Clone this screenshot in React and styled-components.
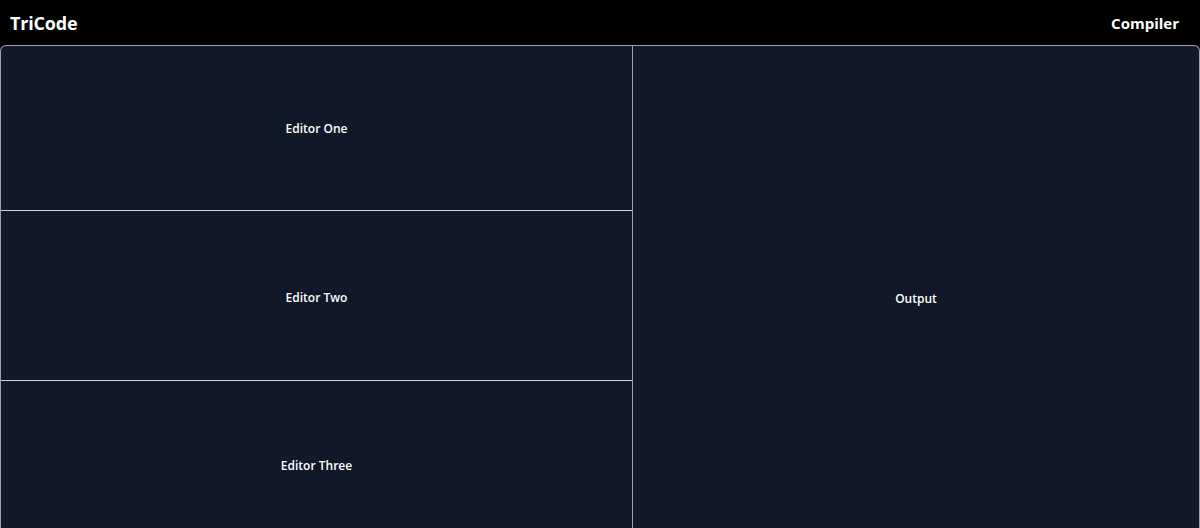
import React from "react";
import styled, { createGlobalStyle } from "styled-components";

const Global = createGlobalStyle`
  html, body { margin: 0; padding: 0; background: #000; }
  body { font-family: "Open Sans", "Noto Sans", sans-serif; color: #fff; }
  * { box-sizing: border-box; }
`;

const Header = styled.header`
  height: 45px;
  background: #000;
  display: flex;
  align-items: center;
  justify-content: space-between;
  padding: 0 21px 0 10px;
`;

const Brand = styled.div`
  font-size: 18px;
  font-weight: 700;
  letter-spacing: -0.2px;
`;

const NavTitle = styled.div`
  font-size: 15px;
  font-weight: 700;
`;

const Workspace = styled.main`
  display: grid;
  grid-template-columns: 632px 1fr;
  background: #111827;
  border: 1px solid #9ca3af;
  border-bottom: none;
  border-radius: 6px 6px 0 0;
  overflow: hidden;
`;

const EditorColumn = styled.div`
  display: flex;
  flex-direction: column;
  border-right: 1px solid #9ca3af;
`;

const Pane = styled.section`
  height: ${(p) => p.$h}px;
  display: flex;
  align-items: center;
  justify-content: center;
  padding-top: ${(p) => p.$shift || 0}px;
  font-size: 12px;
  font-weight: 600;
  border-bottom: ${(p) => (p.$last ? "none" : "1px solid #d1d5db")};
`;

const OutputPane = styled.section`
  display: flex;
  align-items: center;
  justify-content: center;
  font-size: 12px;
  font-weight: 600;
`;

export default function App() {
  return (
    <>
      <Global />
      <Header>
        <Brand>TriCode</Brand>
        <NavTitle>Compiler</NavTitle>
      </Header>
      <Workspace>
        <EditorColumn>
          <Pane $h={165}>Editor One</Pane>
          <Pane $h={170} $shift={3}>Editor Two</Pane>
          <Pane $h={169} $last>Editor Three</Pane>
        </EditorColumn>
        <OutputPane>Output</OutputPane>
      </Workspace>
    </>
  );
}
